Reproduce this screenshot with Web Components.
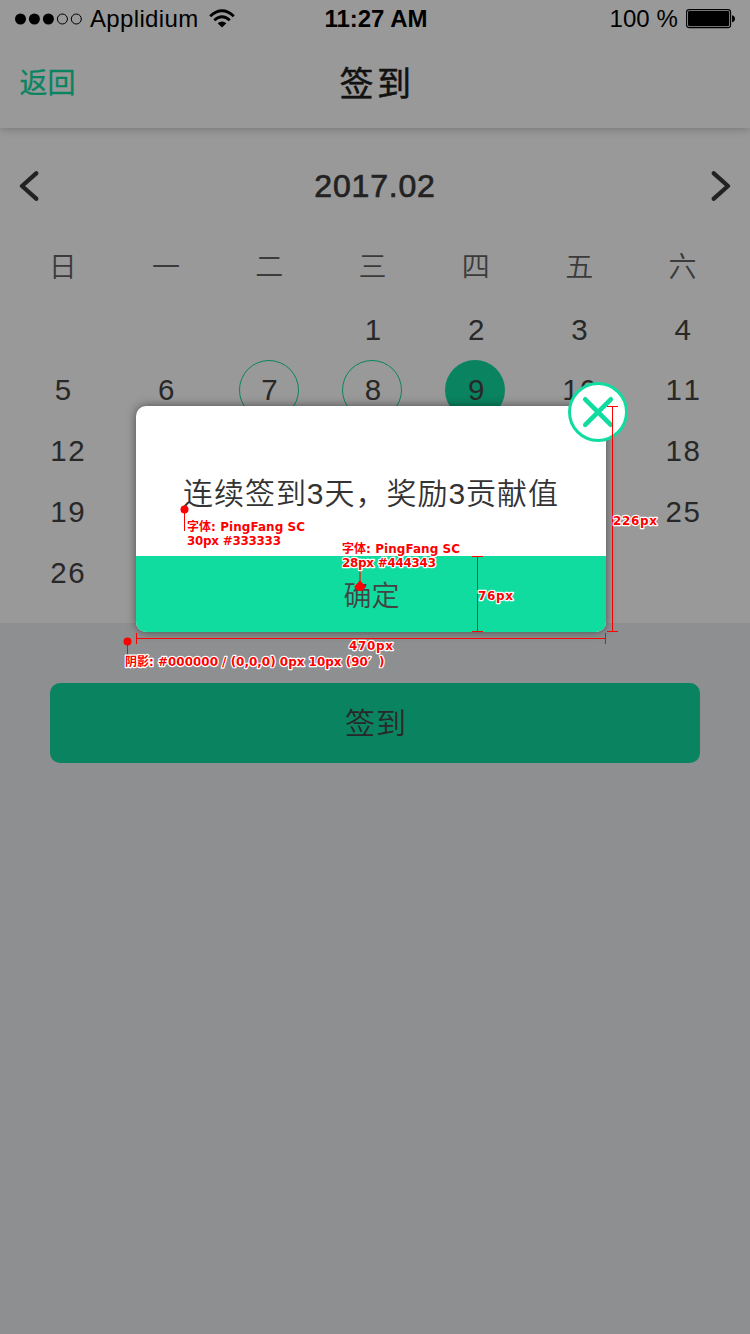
<!DOCTYPE html>
<html lang="zh-CN">
<head>
<meta charset="utf-8">
<title>签到</title>
<style>
html,body{margin:0;padding:0}
body{width:750px;height:1334px;overflow:hidden;background:#8d8f91;font-family:"Liberation Sans","Noto Sans CJK SC",sans-serif;color:#282828}
</style>
</head>
<body>
<checkin-screen></checkin-screen>
<script>
function define(name, html, setup){
  const t=document.createElement('template');
  t.innerHTML=html;
  customElements.define(name, class extends HTMLElement{
    constructor(){super();this.attachShadow({mode:'open'}).append(t.content.cloneNode(true));}
    connectedCallback(){if(setup)setup(this,this.shadowRoot);}
  });
}

define('status-bar', `<style>
:host{display:grid;grid-template-columns:1fr auto 1fr;align-items:center;height:38px;padding:0 15px;box-sizing:border-box;color:#000;font:24px/38px "Liberation Sans",sans-serif}
.l,.r{display:flex;align-items:center}.r{justify-content:flex-end}
svg{display:block;flex:none}
.c{margin-left:8px;letter-spacing:.35px}.w{margin-left:10px;margin-top:-2px}
b{letter-spacing:0;margin-left:2px}.p{margin-right:8px;letter-spacing:.1px}
</style>
<div class="l"><svg width="67" height="12"><g fill="#000"><circle cx="5.5" cy="6" r="5.5"/><circle cx="19.4" cy="6" r="5.5"/><circle cx="33.4" cy="6" r="5.5"/></g><g fill="none" stroke="#000"><circle cx="47.4" cy="6" r="5"/><circle cx="61.3" cy="6" r="5"/></g></svg><span class="c">Applidium</span>
<svg class="w" width="26" height="19" viewBox="0 0 26 19"><g fill="none" stroke="#000" stroke-width="2.8"><path d="M1.2 7.2Q13-3.6 24.8 7.2"/><path d="M5.2 11.2Q13 4.4 20.8 11.2"/></g><path d="M8.6 14.3Q13 10.8 17.4 14.3L13 18.4Z"/></svg></div>
<b>11:27 AM</b>
<div class="r"><span class="p">100 %</span><svg width="49" height="20"><rect x=".6" y=".6" width="44" height="18" rx="2.6" fill="none" stroke="#000" stroke-width="1.1"/><rect x="2" y="2" width="41.2" height="15.2" rx="1.4"/><path d="M46 6.2Q49 7 49 9.7T46 13.2Z"/></svg></div>`);

define('nav-bar', `<style>
:host{display:grid;grid-template-columns:1fr auto 1fr;align-items:center;height:90px;padding:2px 19.5px 0;box-sizing:border-box}
.b{font-size:28px;line-height:40px;color:#0a8460;-webkit-text-stroke:.3px #0a8460}.t{font-size:34px;line-height:48px;letter-spacing:3.4px;margin-right:-4px;color:#111;-webkit-text-stroke:.5px #111}
</style><span class="b"><slot name="back"></slot></span><span class="t"><slot></slot></span>`);

define('day-cell', `<style>
:host{display:flex;align-items:center;justify-content:center;height:60px}
span{display:flex;align-items:center;justify-content:center;width:60px;height:60px;box-sizing:border-box;border-radius:50%;font-size:29.5px;font-kerning:none;letter-spacing:1.4px;padding:1px 0 0 3px;white-space:nowrap}
:host([state=ring]) span{border:1px solid #0a8460}
:host([state=fill]) span{background:#0a8460}
:host([shift]) span{padding-left:12px}
</style><span><slot></slot></span>`);

define('month-calendar', `<style>
:host{display:block;height:495px}
header{display:flex;justify-content:space-between;align-items:center;height:34px;padding:42px 19px 0;font-size:32px}
header svg{display:block;margin-top:-2px}
h2{font:inherit;margin:-1px 0 0;letter-spacing:.8px;-webkit-text-stroke:.7px #222;color:#222}
.week,.days{display:grid;grid-template-columns:repeat(7,103.3px);margin-left:10.5px}
.week{margin-top:43px;height:42px;line-height:42px;font-size:28px;color:#3b3b3b;text-align:center;font-weight:350;text-indent:1px}
.days{margin-top:10px;row-gap:.8px}
</style>
<header><svg width="20" height="30"><path d="M17.2 2.3 3 15 17.2 27.7" fill="none" stroke="#222" stroke-width="4.3" stroke-linecap="round" stroke-linejoin="round"/></svg><h2>2017.02</h2><svg width="20" height="30"><path d="M2.8 2.3 17 15 2.8 27.7" fill="none" stroke="#222" stroke-width="4.3" stroke-linecap="round" stroke-linejoin="round"/></svg></header>
<div class="week"></div><div class="days"></div>`, (el,r)=>{
  for(const d of '日一二三四五六'){const s=document.createElement('span');s.textContent=d;r.querySelector('.week').append(s);}
  const shown=[1,2,3,4,5,6,7,8,9,10,11,12,18,19,25,26];
  for(const d of shown){
    const c=document.createElement('day-cell');c.textContent=d;
    c.style.gridColumn=(d+2)%7+1;c.style.gridRow=Math.floor((d+2)/7)+1;
    if(d===7||d===8)c.setAttribute('state','ring');
    if(d===9)c.setAttribute('state','fill');
    if(d===12||d===19||d===26)c.setAttribute('shift','');
    r.querySelector('.days').append(c);
  }
});

define('action-button', `<style>
:host{display:flex;align-items:center;justify-content:center;margin:60px 50px 0;height:80px;border-radius:10px;background:#0a8460;color:#282828;font-size:30px;font-weight:350;letter-spacing:1px;padding:0 0 4px 2px;box-sizing:border-box}
</style><slot></slot>`);

define('reward-dialog', `<style>
:host{position:absolute;left:136px;top:406px;width:470px;height:226px;border-radius:10px;background:#fff;box-shadow:0 0 10px rgba(0,0,0,.5)}
.msg{height:150px;display:flex;align-items:center;justify-content:center;font-size:30px;font-weight:350;letter-spacing:.98px;color:#333;padding-top:20px;box-sizing:border-box;white-space:nowrap}
.ok{height:76px;display:flex;align-items:center;justify-content:center;background:#11dca0;border-radius:0 0 10px 10px;color:#444343;font-size:28px;font-weight:350;padding:0 0 1px 1px;box-sizing:border-box}
svg{position:absolute;left:432px;top:-24px}
</style><div class="msg"><slot></slot></div><div class="ok"><slot name="ok"></slot></div>
<svg width="60" height="60"><circle cx="30" cy="30" r="28.5" fill="#fff" stroke="#11dca0" stroke-width="3"/><path d="M17.2 17.3 42.8 42.9M42.8 17.3 17.2 42.9" stroke="#11dca0" stroke-width="4.6" stroke-linecap="round"/></svg>`);

define('spec-notes', `<style>
:host{position:absolute;left:0;top:0;width:750px;height:1334px;pointer-events:none}
svg{display:block}
text{font:bold 12px "DejaVu Sans","Noto Sans CJK SC",sans-serif;fill:#f00;stroke:#fff;stroke-width:2.4px;stroke-linejoin:round;paint-order:stroke}
.l{fill:none;stroke:#f00;stroke-width:1}
</style>
<svg width="750" height="1334">
<path class="l" d="M184.5 510V531M127.5 642V655M136 638.5H606M136.5 633V644M605.5 633V644M612.5 406V632M607 406.5H618M607 631.5H618M477.5 556V632M472 556.5H483M472 631.5H483"/>
<path d="M360 568V584" stroke="#a0603c" stroke-width="2"/>
<g fill="#f00"><circle cx="184.5" cy="509.5" r="4"/><circle cx="127.5" cy="641.5" r="4"/><path d="M360 580.5 366 587 360 591 354 587Z"/><circle cx="360" cy="587" r="4"/></g>
<text x="187" y="531" textLength="118">字体: PingFang SC</text>
<text x="187" y="545" textLength="94">30px #333333</text>
<text x="342" y="553" textLength="118">字体: PingFang SC</text>
<text x="342" y="567" textLength="94">28px #444343</text>
<text x="613" y="525" textLength="44">226px</text>
<text x="478" y="600" textLength="35">76px</text>
<text x="349" y="650" textLength="44">470px</text>
<text x="125" y="666" textLength="246">阴影: #000000 / (0,0,0) 0px 10px (90′</text>
<text x="379" y="666">)</text>
</svg>`);

define('checkin-screen', `<style>
:host{display:block;position:relative;width:750px;height:1334px;background:#8d8f91;overflow:hidden}
.top{background:#999;box-shadow:0 2px 8px rgba(0,0,0,.2);position:relative}
.cal{background:#999}
</style>
<div class="top"><status-bar></status-bar><nav-bar><span slot="back">返回</span>签到</nav-bar></div>
<div class="cal"><month-calendar></month-calendar></div>
<action-button>签到</action-button>
<reward-dialog>连续签到3天，奖励3贡献值<span slot="ok">确定</span></reward-dialog>
<spec-notes></spec-notes>`);
</script>
</body>
</html>
